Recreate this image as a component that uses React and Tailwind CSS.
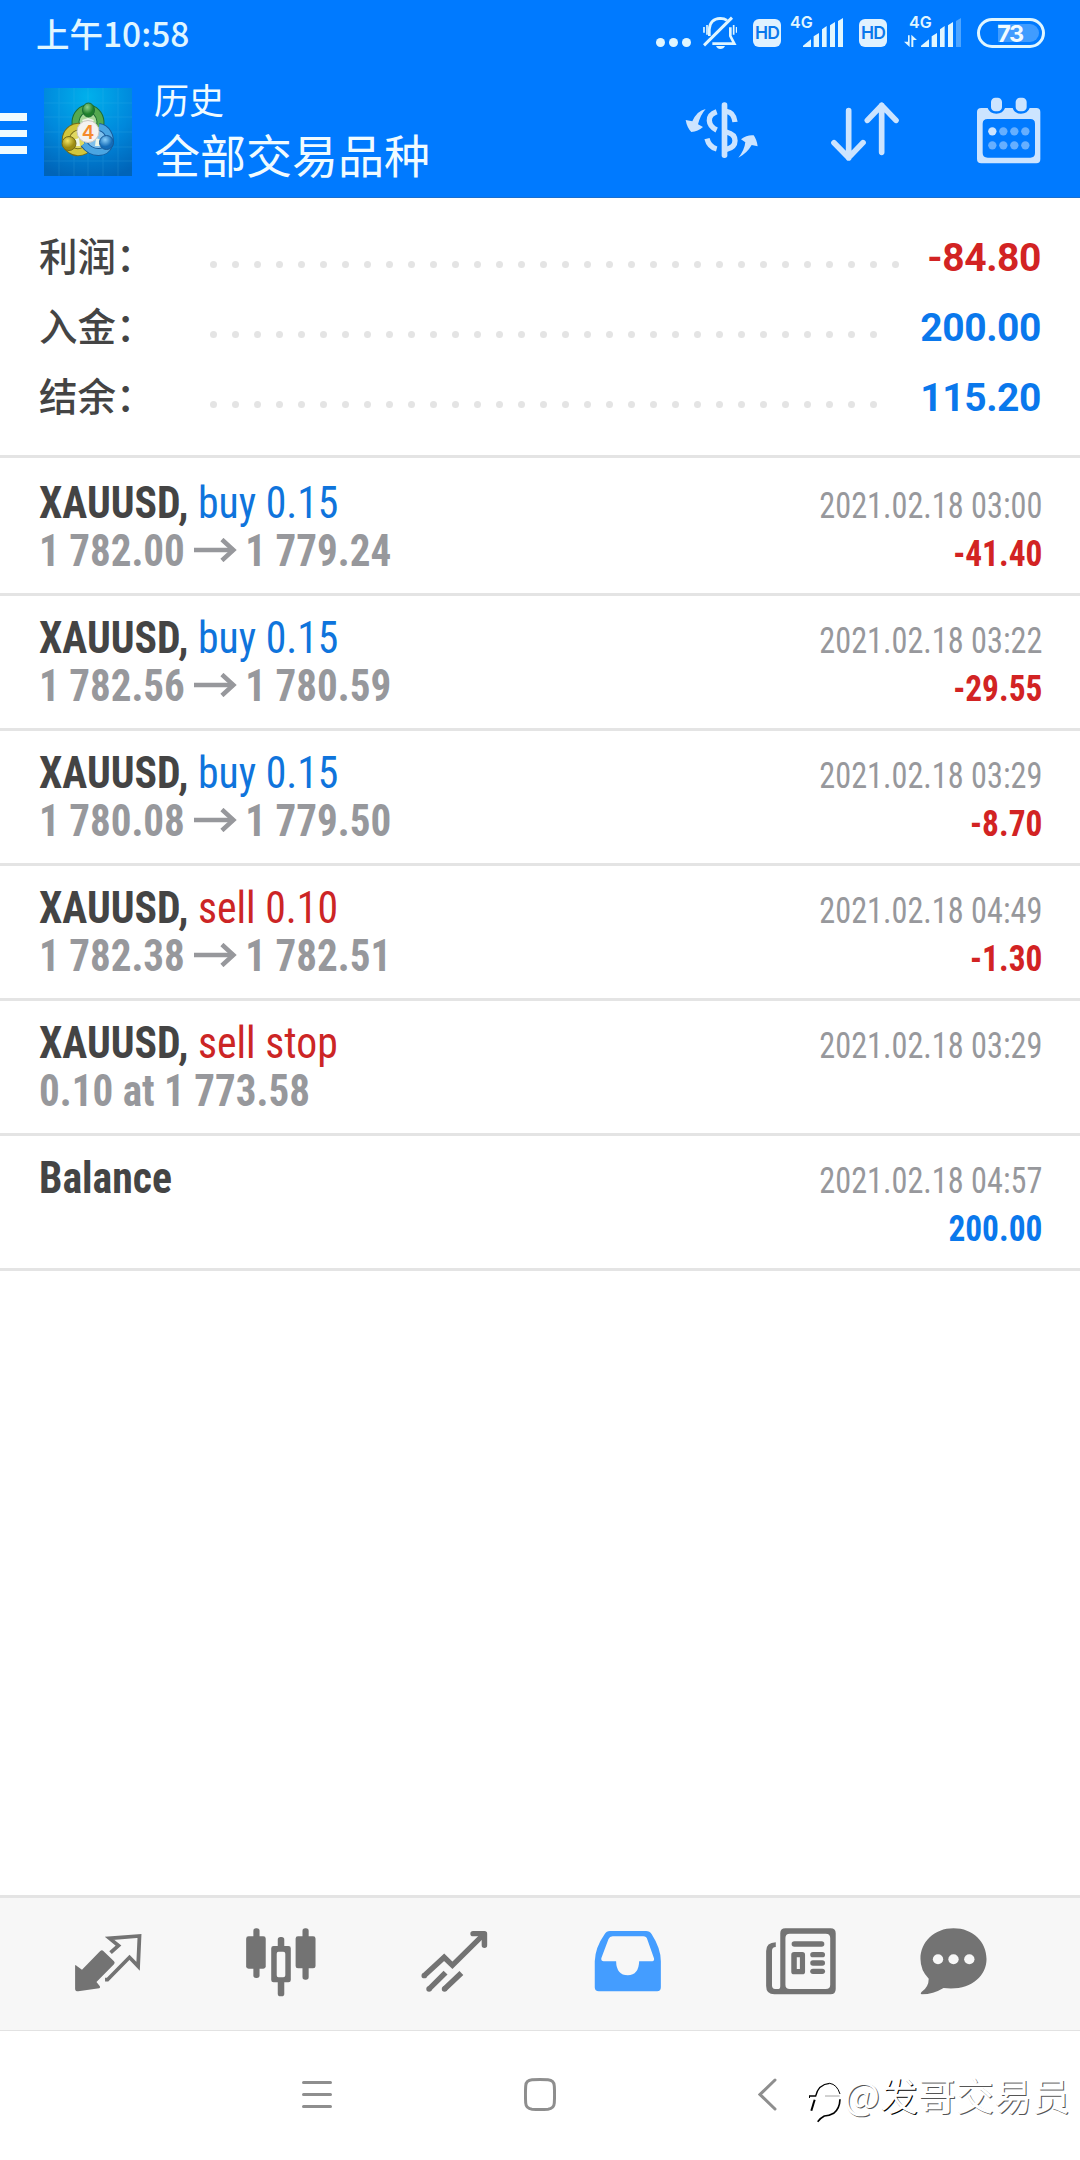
import React from "react";

const summary = [
  { label: "利润：", value: "-84.80", color: "text-[#d22323]", dots: 32 },
  { label: "入金：", value: "200.00", color: "text-[#0a78ec]", dots: 31 },
  { label: "结余：", value: "115.20", color: "text-[#0a78ec]", dots: 31 },
];

const deals = [
  { symbol: "XAUUSD,", type: "buy 0.15", side: "buy", open: "1 782.00", close: "1 779.24", time: "2021.02.18 03:00", profit: "-41.40" },
  { symbol: "XAUUSD,", type: "buy 0.15", side: "buy", open: "1 782.56", close: "1 780.59", time: "2021.02.18 03:22", profit: "-29.55" },
  { symbol: "XAUUSD,", type: "buy 0.15", side: "buy", open: "1 780.08", close: "1 779.50", time: "2021.02.18 03:29", profit: "-8.70" },
  { symbol: "XAUUSD,", type: "sell 0.10", side: "sell", open: "1 782.38", close: "1 782.51", time: "2021.02.18 04:49", profit: "-1.30" },
  { symbol: "XAUUSD,", type: "sell stop", side: "sell", open: "0.10 at 1 773.58", time: "2021.02.18 03:29" },
  { symbol: "Balance", time: "2021.02.18 04:57", profit: "200.00" },
];

function HdBadge({ className }) {
  return (
    <div className={`flex h-7 w-7 items-center justify-center rounded-[6px] bg-[#e0f2ff] pt-px font-['Inter'] text-[17.500px] font-semibold tracking-[-0.8px] text-[#0a78ec] ${className}`}>
      HD
    </div>
  );
}

function StatusBar() {
  return (
    <div className="flex h-[66px] items-start text-[#e0f6ff]">
      <div className="ml-9 mt-[8px] w-[200px] font-['Noto_Sans_CJK_SC',sans-serif] text-[33.500px] font-medium leading-[50px]">上午10:58</div>
      <svg className="ml-[420px] mt-[38px]" width="35" height="9" viewBox="0 0 35 9" fill="currentColor">
        <circle cx="4.500" cy="4.500" r="4.500" />
        <circle cx="17.500" cy="4.500" r="4.500" />
        <circle cx="30.500" cy="4.500" r="4.500" />
      </svg>
      <svg className="ml-3 mt-4" width="34" height="34" viewBox="188 48 102 102" fill="none" stroke="currentColor" strokeWidth="8">
        <path d="M191 136 275 53" strokeWidth="9" />
        <path d="M207 108V88Q208 57 240 55Q252 55 260 61" />
        <path d="M270 82V108L282 131H216" />
        <path d="M227 138H254Q250 147 240 147Q231 147 227 138Z" fill="currentColor" stroke="none" />
        <path d="M191 81V98M200 75V104M280 75V104M289 81V98" strokeWidth="5" />
      </svg>
      <HdBadge className="ml-4 mt-[19px]" />
      <div className="relative ml-[9px] mt-4 h-[31px] w-[54px]">
        <span className="absolute left-0 top-0 font-['Inter'] text-[16px] font-semibold leading-[13px]">4G</span>
        <svg className="absolute left-3 top-0" width="42" height="31" viewBox="486 48 126 93" fill="currentColor">
          <path d="M489 141V137L513 118V141ZM521 141V109L537 99V141ZM546 141V88L560 78V141ZM570 141V76L585 66V141ZM594 141V63L609 54V141Z" />
        </svg>
      </div>
      <HdBadge className="ml-[15px] mt-[19px]" />
      <div className="relative ml-[17px] mt-4 h-[31px] w-[58px]">
        <span className="absolute left-[5px] top-0 font-['Inter'] text-[16px] font-semibold leading-[13px]">4G</span>
        <svg className="absolute left-0 top-0" width="58" height="31" viewBox="792 48 174 93" fill="currentColor">
          <path d="M843 141V137L867 118V141ZM875 141V109L891 99V141ZM900 141V88L914 78V141ZM924 141V76L939 66V141Z" />
          <path d="M948 141V63L963 54V141Z" opacity=".35" />
          <path d="M804 106H809V141L792 125H804ZM814 141V104L831 120H820V141Z" />
        </svg>
      </div>
      <div className="relative ml-[15px] mt-[18px] h-[30px] w-[68px] rounded-full border-[3px] border-current p-[3px] pl-[18px]">
        <div className="h-full rounded-r-full bg-[#409cff]" />
        <span className="absolute inset-0 pr-0.5 text-center font-['Inter'] text-[23.500px] font-bold leading-[25px] tracking-[-1.5px] text-[#f2fbff]">73</span>
      </div>
    </div>
  );
}

function Logo() {
  return (
    <svg className="ml-[17px] mt-[22px]" width="88" height="88" viewBox="0 0 88 88">
      <defs>
        <radialGradient id="bg" cx=".5" cy=".1" r=".95">
          <stop offset="0" stopColor="#00b0ec" />
          <stop offset=".55" stopColor="#0088dc" />
          <stop offset="1" stopColor="#0064b8" />
        </radialGradient>
        <radialGradient id="green" cx=".4" cy=".3"><stop offset="0" stopColor="#8fd08a" /><stop offset="1" stopColor="#1f7f2c" /></radialGradient>
        <radialGradient id="gold" cx=".4" cy=".3"><stop offset="0" stopColor="#f4e562" /><stop offset="1" stopColor="#9c8b12" /></radialGradient>
        <radialGradient id="sky" cx=".4" cy=".3"><stop offset="0" stopColor="#8cd0fa" /><stop offset="1" stopColor="#146cb8" /></radialGradient>
      </defs>
      <rect width="88" height="88" fill="url(#bg)" />
      <path d="M15 0V88M30 0V88M44 0V88M59 0V88M74 0V88M0 15H88M0 29H88M0 44H88M0 59H88M0 73H88" stroke="#5cc8f0" strokeWidth="1" opacity=".15" />
      <path d="M34 43A12.500 14 0 1 1 54 43" fill="#a9d79a" stroke="#1d6d35" strokeWidth="8" />
      <path d="M34 43A12.500 14 0 1 1 54 43" fill="none" stroke="#55a94f" strokeWidth="6" />
      <path d="M42 62C30 68 20 60 22 49C24 42 30 38 36 39" fill="#e0d860" stroke="#746b18" strokeWidth="8" />
      <path d="M42 62C30 68 20 60 22 49C24 42 30 38 36 39" fill="none" stroke="#d3c63c" strokeWidth="6" />
      <path d="M40 56C48 67 62 66 65 57C68 48 62 40 55 39" fill="#7fc0ec" stroke="#175a9a" strokeWidth="8" />
      <path d="M40 56C48 67 62 66 65 57C68 48 62 40 55 39" fill="none" stroke="#4ba5e2" strokeWidth="6" />
      <path d="M38 32 44 30 50 32 46 38H42ZM29 52 35 50 36 58 31 58ZM52 50 58 52 57 58 51 58Z" fill="#eef6e8" />
      <ellipse cx="44.500" cy="22" rx="6" ry="7" fill="url(#green)" stroke="#1d6d35" />
      <circle cx="25" cy="55.500" r="7" fill="url(#gold)" stroke="#746b18" />
      <circle cx="62.500" cy="54.500" r="7" fill="url(#sky)" stroke="#175a9a" />
      <circle cx="44" cy="43.500" r="11" fill="#f4f2f0" stroke="#c9c5c0" />
      <text x="44" y="50.500" textAnchor="middle" fontFamily="Inter" fontWeight="600" fontSize="19" fill="#f58a2c">4</text>
    </svg>
  );
}

function Header() {
  return (
    <header className="h-[198px] border-b border-[#1a6fd0] bg-[#007aff]">
      <StatusBar />
      <div className="flex h-[131px] items-start font-['Noto_Sans_CJK_SC',sans-serif] text-[#f0fbff]">
        <div className="mt-[47px] flex w-[27px] flex-col gap-[9px]">
          <div className="h-[7.500px] bg-current" />
          <div className="h-[7.500px] bg-current" />
          <div className="h-[7.500px] bg-current" />
        </div>
        <Logo />
        <div className="ml-[22px] w-[531px]">
          <div className="mt-[9px] text-[35px] leading-[48px]">历史</div>
          <div className="text-[46px] leading-[61px]">全部交易品种</div>
        </div>
        <svg className="mt-[34px]" width="74" height="60" viewBox="136 300 222 180" fill="#cce4ff">
          <rect x="246" y="307" width="17" height="167" rx="8" />
          <g fill="none" stroke="#cce4ff" strokeWidth="16">
            <path d="M231 335Q208 343 209 362Q210 380 231 390" />
            <path d="M202 416Q208 441 231 447" />
            <path d="M260 334Q282 336 286 366" />
            <path d="M260 396Q286 402 286 422Q286 442 260 448" />
          </g>
          <path d="M198 327Q172 332 158 364L138 360Q142 383 155 396Q175 394 190 381L175 373Q182 345 198 327Z" />
          <path d="M296 473Q322 460 336 435L354 439Q351 418 342 406Q322 404 304 418L317 427Q314 452 296 473Z" />
        </svg>
        <svg className="ml-[71px] mt-[34px]" width="70" height="63" viewBox="570 300 210 189" fill="none" stroke="#cce4ff" strokeWidth="17" strokeLinecap="round" strokeLinejoin="round">
          <path d="M626 332V474M582 428 626 473 669 428" />
          <path d="M725 457V316M682 361 725 316 768 361" />
        </svg>
        <svg className="ml-[76px] mt-[30px]" width="66" height="68" viewBox="1007 288 198 204" fill="#cce4ff">
          <path d="M1023 324H1042Q1048 341 1068 341Q1088 341 1094 324H1117Q1123 341 1142 341Q1162 341 1168 324H1188Q1200 324 1200 336V477Q1200 490 1188 490H1023Q1010 490 1010 477V336Q1010 324 1023 324ZM1042 357Q1027 357 1027 371V459Q1027 473 1042 473H1170Q1184 473 1184 459V371Q1184 357 1170 357Z" fillRule="evenodd" />
          <rect x="1052" y="293" width="33" height="41" rx="13" />
          <rect x="1126" y="293" width="33" height="41" rx="13" />
          <circle cx="1056" cy="394" r="12.500" />
          <g fill="#66afff">
            <circle cx="1089" cy="394" r="12.500" />
            <circle cx="1122" cy="394" r="12.500" />
            <circle cx="1155" cy="394" r="12.500" />
            <circle cx="1056" cy="436" r="12.500" />
            <circle cx="1089" cy="436" r="12.500" />
            <circle cx="1122" cy="436" r="12.500" />
            <circle cx="1155" cy="436" r="12.500" />
          </g>
        </svg>
      </div>
    </header>
  );
}

function Summary() {
  return (
    <section className="h-[260px] border-b-[3px] border-[#e4e4e4] pl-[39px] pr-[39px] pt-[24px]">
      {summary.map((row) => (
        <div key={row.label} className="flex h-[70px] items-center">
          <div className="w-[171px] pb-1.5 font-['Noto_Sans_CJK_SC',sans-serif] text-[38.500px] font-medium leading-[64px] text-[#444]">{row.label}</div>
          <div className="mt-[15px] flex gap-[15px]">
            {Array.from({ length: row.dots }, (_, i) => (
              <div key={i} className="h-[7px] w-[7px] rounded-full bg-[#e4e4e4]" />
            ))}
          </div>
          <div className={`ml-auto pt-0.5 font-['Roboto'] text-[39px] font-bold leading-[68px] tracking-[-0.4px] ${row.color}`}>{row.value}</div>
        </div>
      ))}
    </section>
  );
}

function Arrow() {
  return (
    <svg className="ml-[10px] mr-[9px] mt-[11px]" width="46.500" height="24" viewBox="0 0 43 24" preserveAspectRatio="none" fill="none" stroke="currentColor" strokeWidth="4.500">
      <path d="M0 12H40" />
      <path d="M28 1.500 39.500 12 28 22.500" />
    </svg>
  );
}

function DealRow({ deal }) {
  const profitColor = deal.profit && deal.profit.startsWith("-") ? "text-[#d22323]" : "text-[#0a78ec]";
  return (
    <div className="flex h-[135px] justify-between border-b-[3px] border-[#e4e4e4] pl-[39px] pr-[38px] pt-[18px] font-['Roboto_Condensed','Roboto'] [font-stretch:75%]">
      <div className="whitespace-pre text-[44.500px] leading-[48px]">
        <div className="origin-left scale-x-[0.9375]">
          <span className="font-bold text-[#444]">{deal.symbol}</span>
          <span className={deal.side === "buy" ? "text-[#0f74dc]" : "text-[#cc2525]"}> {deal.type}</span>
        </div>
        <div className="flex origin-left scale-x-[0.9225] items-start font-bold text-[#97989c]">
          <span>{deal.open}</span>
          {deal.close && <Arrow />}
          <span>{deal.close}</span>
        </div>
      </div>
      <div className="pt-[3px] text-right text-[36.500px] leading-[48px]">
        <div className="origin-right scale-x-[0.884] text-[#97989c]">{deal.time}</div>
        <div className={`origin-right scale-x-[0.914] font-bold ${profitColor}`}>{deal.profit}</div>
      </div>
    </div>
  );
}

function TabBar() {
  return (
    <nav className="flex h-[136px] border-b border-t-[3px] border-b-[#e2e2e2] border-t-[#e4e4e4] bg-[#f7f7f7] pl-[72px] pt-[29px] text-[#737373]">
      <svg width="72.300" height="70" viewBox="210 140 210 210" preserveAspectRatio="none" fill="currentColor">
        <path d="M219 256Q220 252 223 256L239 268L292 212Q297 208 301 212L332 243Q336 248 332 252L281 305L291 318Q293 322 289 324L228 333Q219 333 219 325Z" />
        <path d="M322 217 345 196 319 174 406 167 402 258 377 231 313 298H306" fill="none" stroke="currentColor" strokeWidth="11" />
      </svg>
      <svg className="ml-[97px]" width="79" height="70" viewBox="700 140 230 210" preserveAspectRatio="none" fill="currentColor">
        <rect x="736" y="144" width="18" height="149" rx="8" />
        <rect x="715" y="168" width="57" height="97" rx="7" />
        <rect x="879" y="144" width="18" height="154" rx="8" />
        <rect x="859" y="168" width="58" height="96" rx="7" />
        <rect x="807" y="170" width="19" height="40" rx="8" />
        <rect x="807" y="295" width="19" height="53" rx="8" />
        <path d="M795 197H838Q845 197 845 204V299Q845 306 838 306H795Q788 306 788 299V204Q788 197 795 197ZM809 214Q804 214 804 220V285Q804 291 809 291H823Q829 291 829 285V220Q829 214 823 214Z" fillRule="evenodd" />
      </svg>
      <svg className="ml-[97px]" width="75.700" height="70" viewBox="1210 140 220 210" preserveAspectRatio="none" fill="none" stroke="currentColor" strokeWidth="16">
        <path d="M1231 286 1289 231 1313 255 1405 161" />
        <path d="M1231 286H1231.100M1245 326H1245.100M1290 326H1290.100" strokeLinecap="round" />
        <path d="M1373 160H1406V195" strokeLinecap="round" strokeLinejoin="round" />
        <path d="M1245 326 1293 277M1290 326 1339 278" />
      </svg>
      <svg className="ml-[99px]" width="72.300" height="70" viewBox="150 140 210 210" preserveAspectRatio="none">
        <path d="M202 152H307Q318 152 323 161Q350 204 350 243V321Q350 333 339 333H170Q158 333 158 321V243Q159 202 187 161Q192 152 202 152ZM210 168Q201 168 198 176L177 234Q176 243 184 243H220Q221 285 254 285Q286 284 287 243H325Q332 242 330 234L311 178Q308 168 299 168Z" fill="#449dff" fillRule="evenodd" />
      </svg>
      <svg className="ml-[98px]" width="77.500" height="70" viewBox="645 140 225 210" preserveAspectRatio="none" fill="currentColor">
        <path d="M713 144H844Q859 144 859 159V326Q859 342 844 342H681Q657 342 657 317V212Q657 187 685 186V200Q674 200 674 212V315Q674 326 683 326H693Q698 326 698 317V159Q698 144 713 144ZM726 160Q713 160 713 173V313Q713 326 726 326H830Q843 326 843 313V173Q843 160 830 160Z" fillRule="evenodd" />
        <rect x="731" y="183" width="95" height="16" rx="8" />
        <path d="M738 215H762Q770 215 770 223V274Q770 282 762 282H738Q730 282 730 274V223Q730 215 738 215ZM746 231V266H755V231Z" fillRule="evenodd" />
        <rect x="785" y="215" width="43" height="16" rx="8" />
        <rect x="785" y="240" width="43" height="16" rx="8" />
        <rect x="785" y="265" width="43" height="16" rx="8" />
      </svg>
      <svg className="ml-[76px]" width="75.700" height="70" viewBox="1090 140 220 210" preserveAspectRatio="none" fill="currentColor">
        <path d="M1199 144C1256 144 1295 185 1295 236C1295 290 1245 333 1170 323Q1140 342 1107 342Q1101 341 1106 335Q1127 320 1127 295Q1103 270 1103 236C1103 185 1143 144 1199 144Z" />
        <g fill="#f7f7f7">
          <circle cx="1154" cy="237" r="15" />
          <circle cx="1199" cy="237" r="15" />
          <circle cx="1245" cy="237" r="15" />
        </g>
      </svg>
    </nav>
  );
}

function SystemNav() {
  return (
    <div className="flex h-[129px] items-start pl-[302px] pt-[45px]">
      <svg className="mt-[3px]" width="30" height="32" viewBox="0 0 30 32" fill="none" stroke="#8e8e8e" strokeWidth="3" strokeLinecap="round">
        <path d="M1.500 3.500H28.500M1.500 15.500H28.500M1.500 27.500H28.500" />
      </svg>
      <svg className="ml-[192px] mt-[2px]" width="32" height="33" viewBox="0 0 32 33" fill="none" stroke="#8e8e8e" strokeWidth="3">
        <path d="M8 1.800Q16 1.200 24 1.800Q30 2.200 30.300 8Q30.800 16 30.300 25Q30 30.500 24 31.200Q16 31.800 8 31.200Q2 30.500 1.700 25Q1.200 16 1.700 8Q2 2.200 8 1.800Z" />
      </svg>
      <svg className="ml-[202px] mt-[2px]" width="19" height="33" viewBox="0 0 19 33" fill="none" stroke="#8e8e8e" strokeWidth="3" strokeLinecap="round">
        <path d="M17 2 2 16.500 17 31" />
      </svg>
      {/* Author watermark */}
      <div className="ml-[32px] flex items-start">
        <svg className="mr-px mt-[3px]" width="34" height="44" viewBox="30 60 102 132" fill="none" stroke="#000" strokeWidth="4">
          <path d="M31 117V111H50Q58 76 92 73" strokeWidth="4" />
          <path d="M47 122 37 155" strokeWidth="6" />
          <path d="M92 73Q114 76 123 105" strokeWidth="3" />
          <path d="M123 121Q122 150 104 163Q90 171 76 171Q66 176 56 188" strokeWidth="5" />
          <path d="M78 111H122" strokeWidth="2" stroke="#777" />
        </svg>
        <div className="-mt-1 font-['Noto_Sans_CJK_SC',sans-serif] text-[38px] leading-[44px] text-white [text-shadow:1px_1px_0_#555]">
          @<span className="[text-shadow:1px_1px_0_#000]">发</span>哥交易员
        </div>
      </div>
    </div>
  );
}

export default function App() {
  return (
    <div className="flex h-[2160px] w-[1080px] flex-col overflow-hidden bg-white">
      <Header />
      <Summary />
      <main className="flex-grow pt-[3px]">
        {deals.map((deal, i) => (
          <DealRow key={i} deal={deal} />
        ))}
      </main>
      <TabBar />
      <SystemNav />
    </div>
  );
}
